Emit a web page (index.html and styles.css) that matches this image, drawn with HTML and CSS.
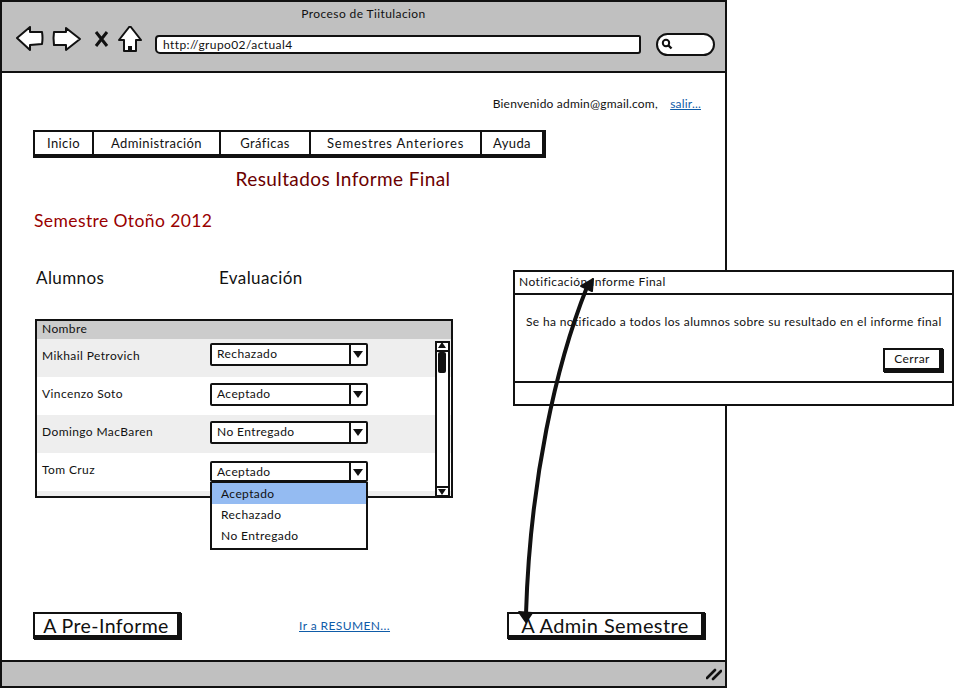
FILE: index.html
```html
<!DOCTYPE html>
<html>
  <head>
    <title>Proceso de Tiitulacion</title>
    <link rel="stylesheet" href="styles.css">
  </head>
  <body>
    <div class="stage">
      <div class="window">
        <div class="chrome">
          <div class="chrome-title">Proceso de Tiitulacion</div>
          <div class="toolbar">
            <svg class="nav-icons" width="130" height="30" viewBox="0 0 130 30">
              <path d="M1 12 L14 1 L14 6 L26 6 Q27 12 26 18 L14 19 L14 24 Z" fill="#fff" stroke="#111" stroke-width="2" stroke-linejoin="round"/>
              <path d="M38 6 L50 6 L50 2 L64 13 L50 24 L50 19 L38 19 Q37 12 38 6 Z" fill="#fff" stroke="#111" stroke-width="2" stroke-linejoin="round"/>
              <path d="M80 6 L91 20 M91 6 L80 20" fill="none" stroke="#111" stroke-width="3"/>
              <path d="M114 0 L125 14 L120 14 L120 25 L108 25 L108 14 L103 14 Z" fill="#fff" stroke="#111" stroke-width="2" stroke-linejoin="round"/>
              <rect x="112" y="20" width="4" height="5" fill="#111"/>
            </svg>
            <div class="url">http://grupo02/actual4</div>
            <div class="search">
              <svg width="12" height="12" viewBox="0 0 12 12">
                <circle cx="5" cy="5" r="3.2" fill="none" stroke="#111" stroke-width="2"/>
                <path d="M7.5 7.5 L10.5 10.5" stroke="#111" stroke-width="2.4"/>
              </svg>
            </div>
          </div>
        </div>

        <div class="content">
          <div class="welcome">Bienvenido admin@gmail.com, <a class="link" href="#">salir...</a></div>
          <div class="tabs">
            <div class="tab tab-inicio">Inicio</div>
            <div class="tab tab-admin">Administración</div>
            <div class="tab tab-graf">Gráficas</div>
            <div class="tab tab-sem">Semestres Anteriores</div>
            <div class="tab tab-ayuda">Ayuda</div>
          </div>
          <h1 class="page-title">Resultados Informe Final</h1>
          <h2 class="semester">Semestre Otoño 2012</h2>
          <div class="columns">
            <div class="col-alumnos">Alumnos</div>
            <div>Evaluación</div>
          </div>

          <div class="table">
            <div class="table-head">Nombre</div>
            <div class="row row-alt">
              <div class="name">Mikhail Petrovich</div>
              <div class="select select-first">Rechazado<span class="caret"></span></div>
            </div>
            <div class="row">
              <div class="name">Vincenzo Soto</div>
              <div class="select">Aceptado<span class="caret"></span></div>
            </div>
            <div class="row row-alt">
              <div class="name">Domingo MacBaren</div>
              <div class="select">No Entregado<span class="caret"></span></div>
            </div>
            <div class="row">
              <div class="name">Tom Cruz</div>
              <div class="select select-open">Aceptado<span class="caret"></span></div>
            </div>
            <div class="row row-alt row-cut"></div>
            <div class="scrollbar">
              <span class="scroll-up"></span>
              <span class="scroll-thumb"></span>
              <span class="scroll-down"></span>
            </div>
            <div class="dropdown">
              <div class="option option-on">Aceptado</div>
              <div class="option">Rechazado</div>
              <div class="option">No Entregado</div>
            </div>
          </div>

          <div class="actions">
            <div class="button button-pre">A Pre-Informe</div>
            <a class="link link-resumen" href="#">Ir a RESUMEN...</a>
            <div class="button button-admin">A Admin Semestre</div>
          </div>
        </div>

        <div class="statusbar">
          <svg width="16" height="14" viewBox="0 0 16 14">
            <path d="M1 11 L9 3 M7 12 L15 4" stroke="#111" stroke-width="2.6" stroke-linecap="round"/>
          </svg>
        </div>
      </div>

      <div class="modal">
        <div class="modal-title">Notificación Informe Final</div>
        <div class="modal-body">
          <p class="modal-text">Se ha notificado a todos los alumnos sobre su resultado en el informe final</p>
          <div class="button button-small">Cerrar</div>
        </div>
        <div class="modal-foot"></div>
      </div>

      <svg class="arrow" width="954" height="689" viewBox="0 0 954 689">
        <path d="M587 287 C556 365 530 480 526 614" fill="none" stroke="#111" stroke-width="4"/>
        <path d="M593 279 L581 286 L592 291 Z" fill="#111" stroke="#111" stroke-width="2" stroke-linejoin="round"/>
        <path d="M526 622 L519 612 L532 613 Z" fill="#111" stroke="#111" stroke-width="2" stroke-linejoin="round"/>
      </svg>
    </div>
  </body>
</html>
```

FILE: styles.css
```css
* {
  box-sizing: border-box;
}
body {
  margin: 0;
  background: #fff;
  color: #111;
  font-family: 'Lato', 'Liberation Sans', sans-serif;
  font-size: 13px;
  letter-spacing: .4px;
}
.stage {
  position: relative;
  width: 954px;
  height: 689px;
  overflow: hidden;
}

/* window */
.window {
  display: flex;
  flex-direction: column;
  width: 727px;
  height: 688px;
  border: 2px solid #111;
}
.chrome {
  height: 71px;
  padding-top: 5px;
  background: #c0c0c0;
  border-bottom: 2px solid #111;
}
.chrome-title {
  text-align: center;
  font-size: 12px;
  line-height: 14px;
}
.toolbar {
  display: flex;
  align-items: center;
  margin-top: 5px;
  padding-left: 14px;
}
.nav-icons {
  flex: none;
  margin: 0 9px 6px 0;
}
.url {
  width: 486px;
  height: 19px;
  padding-left: 6px;
  line-height: 15px;
  font-size: 12px;
  background: #fff;
  border: 2px solid #111;
  border-radius: 4px 2px 3px 5px;
}
.search {
  display: flex;
  align-items: center;
  width: 59px;
  height: 23px;
  margin-left: 15px;
  padding-left: 3px;
  background: #fff;
  border: 2px solid #111;
  border-radius: 12px;
}
.content {
  flex: 1;
  padding: 0 18px 0 31px;
}
.statusbar {
  display: flex;
  justify-content: flex-end;
  align-items: center;
  height: 26px;
  padding-right: 3px;
  background: #c0c0c0;
  border-top: 2px solid #111;
}

.link {
  color: #0f5ca8;
  text-decoration: underline;
  white-space: nowrap;
}

/* top of page */
.welcome {
  padding: 23px 6px 0 0;
  text-align: right;
  font-size: 12px;
  line-height: 16px;
  letter-spacing: .2px;
}
.welcome .link {
  margin-left: 9px;
}
.tabs {
  display: flex;
  width: 513px;
  height: 28px;
  margin-top: 18px;
  background: #fff;
  border: 2px solid #111;
  border-right-width: 4px;
  border-bottom-width: 4px;
}
.tab {
  line-height: 22px;
  text-align: center;
  border-right: 2px solid #111;
}
.tab-inicio { width: 59px; }
.tab-admin { width: 127px; }
.tab-graf { width: 90px; }
.tab-sem { width: 171px; letter-spacing: .8px; }
.tab-ayuda { flex: 1; border-right: 0; }
.page-title {
  margin: 9px 0 0;
  padding-right: 54px;
  text-align: center;
  font-size: 19px;
  font-weight: normal;
  line-height: 24px;
  color: #6b0000;
}
.semester {
  margin: 19px 0 0 1px;
  font-size: 17.5px;
  font-weight: normal;
  line-height: 22px;
  color: #990000;
}
.columns {
  display: flex;
  margin: 35px 0 0 3px;
  font-size: 17px;
  line-height: 22px;
}
.col-alumnos {
  width: 183px;
}

/* table */
.table {
  position: relative;
  width: 418px;
  height: 179px;
  margin: 30px 0 0 2px;
  overflow: visible;
  border: 2px solid #111;
}
.table-head {
  height: 18px;
  padding-left: 5px;
  background: #ccc;
  font-size: 12px;
  line-height: 15px;
}
.row {
  display: flex;
  height: 38px;
  padding-left: 5px;
}
.row-alt {
  background: #eee;
}
.row-cut {
  height: 5px;
}
.name {
  width: 168px;
  padding-top: 8px;
  font-size: 12px;
  line-height: 18px;
}
.select {
  position: relative;
  width: 158px;
  height: 23px;
  margin-top: 6px;
  padding-left: 5px;
  background: #fff;
  border: 2px solid #111;
  border-radius: 2px;
  font-size: 12px;
  line-height: 18px;
}
.select-first {
  margin-top: 4px;
}
.select-open {
  margin-top: 8px;
  height: 21px;
}
.caret {
  position: absolute;
  top: 0;
  right: 0;
  bottom: 0;
  width: 17px;
  background: #fff;
  border-left: 2px solid #111;
}
.caret::after {
  content: "";
  position: absolute;
  top: 6px;
  left: 2px;
  border: 5.5px solid transparent;
  border-top: 7px solid #111;
  border-bottom: 0;
}
.scrollbar {
  position: absolute;
  top: 20px;
  right: 1px;
  bottom: 0;
  display: flex;
  flex-direction: column;
  width: 15px;
  background: #fff;
  border: 2px solid #111;
  border-bottom-width: 1px;
}
.scroll-up, .scroll-down {
  position: relative;
  flex: none;
  height: 9px;
}
.scroll-up {
  border-bottom: 2px solid #111;
}
.scroll-down {
  margin-top: auto;
  border-top: 2px solid #111;
}
.scroll-up::after, .scroll-down::after {
  content: "";
  position: absolute;
  top: 1px;
  left: 1px;
  border: 4.5px solid transparent;
}
.scroll-up::after {
  top: -1px;
  border-top: 0;
  border-bottom: 6px solid #111;
}
.scroll-down::after {
  border-bottom: 0;
  border-top: 6px solid #111;
}
.scroll-thumb {
  width: 8px;
  height: 21px;
  margin-left: 1px;
  background: #111;
  border-radius: 2px;
}
.dropdown {
  position: absolute;
  top: 161px;
  left: 173px;
  width: 158px;
  height: 68px;
  background: #fff;
  border: 2px solid #111;
  border-top-width: 1px;
}
.option {
  height: 21px;
  padding-left: 9px;
  font-size: 12px;
  line-height: 21px;
}
.option-on {
  background: #94bbf2;
}

/* buttons */
.actions {
  display: flex;
  align-items: center;
  margin-top: 114px;
}
.button {
  flex: none;
  background: #fff;
  border: 2px solid #111;
  border-right-width: 4px;
  border-bottom-width: 4px;
  text-align: center;
  box-shadow: 1px 1px 0 #111;
}
.button-pre {
  width: 148px;
  height: 27px;
  font-size: 19.5px;
  line-height: 23px;
}
.link-resumen {
  margin-left: 118px;
  font-size: 12px;
}
.button-admin {
  width: 198px;
  height: 27px;
  margin-left: 117px;
  font-size: 20px;
  line-height: 23px;
}

/* modal */
.modal {
  position: absolute;
  top: 270px;
  left: 513px;
  display: flex;
  flex-direction: column;
  width: 441px;
  height: 136px;
  background: #fff;
  border: 2px solid #111;
}
.modal-title {
  height: 23px;
  padding-left: 4px;
  font-size: 12px;
  line-height: 19px;
  border-bottom: 2px solid #111;
}
.modal-body {
  flex: 1;
  padding: 18px 9px 0 11px;
  border-bottom: 2px solid #111;
}
.modal-text {
  margin: 0;
  font-size: 12px;
  line-height: 18px;
  letter-spacing: .36px;
  white-space: nowrap;
}
.button-small {
  width: 60px;
  height: 24px;
  margin: 17px 0 0 auto;
  font-size: 12px;
  line-height: 18px;
}
.modal-foot {
  height: 21px;
}
.arrow {
  position: absolute;
  top: 0;
  left: 0;
  pointer-events: none;
}
```
